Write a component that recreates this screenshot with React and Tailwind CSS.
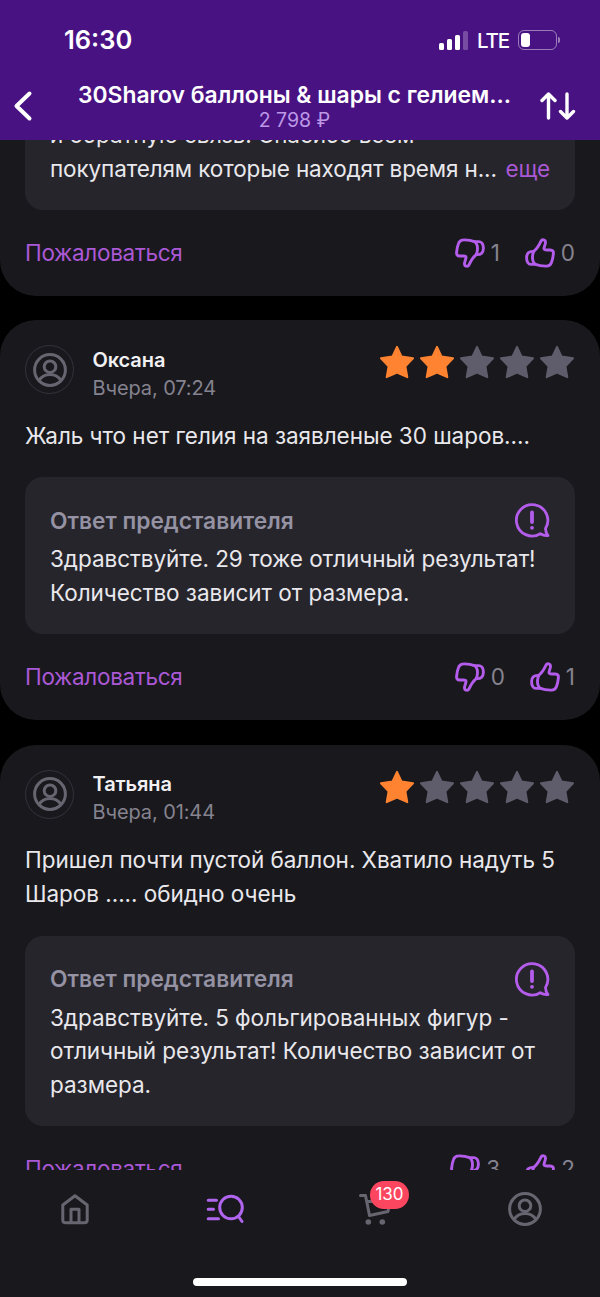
import React from 'react'

const reviews = [
  {
    name: 'Оксана',
    date: 'Вчера, 07:24',
    rating: 2,
    text: ['Жаль что нет гелия на заявленые 30 шаров....'],
    reply: ['Здравствуйте. 29 тоже отличный результат!', 'Количество зависит от размера.'],
    dislikes: 0,
    likes: 1,
  },
  {
    name: 'Татьяна',
    date: 'Вчера, 01:44',
    rating: 1,
    text: ['Пришел почти пустой баллон. Хватило надуть 5', 'Шаров ..... обидно очень'],
    reply: ['Здравствуйте. 5 фольгированных фигур -', 'отличный результат! Количество зависит от', 'размера.'],
    dislikes: 3,
    likes: 2,
  },
]

const UserIcon = ({ className }) => (
  <svg viewBox="0 0 34 34" fill="none" stroke="currentColor" strokeWidth="3" className={className}>
    <circle cx="17" cy="17" r="15.4" />
    <circle cx="17" cy="13.700" r="5.800" />
    <path d="M6 27.500C8.500 23.500 12.500 21.500 17 21.500s8.500 2 11 6" />
  </svg>
)

const ThumbIcon = ({ className }) => (
  <svg
    viewBox="0 0 30 30"
    fill="none"
    stroke="currentColor"
    strokeWidth="2.9"
    strokeLinecap="round"
    strokeLinejoin="round"
    className={className}
  >
    <path d="M9 13.200C12 10.800 14 7.500 16 3.200C17 1 20.600 1.300 20.500 4.500C20.300 7 18.900 9 19 10.800C19.200 12 20 12 22 12H25.300C27.800 12 28.600 13.500 28.400 15.500C28.100 19 27.500 22 26.500 24.500C25.500 27.200 24 28.100 21.500 28.100C17.500 28.200 14 27.800 10.500 26.400C8.300 25 7.400 22 7.500 19C7.600 16.500 8 14.600 9 13.200Z" />
    <path d="M8.500 13.400C4.200 13 1.700 15.200 1.600 19.500C1.500 23.700 3.200 26.400 6 26.400H10" />
  </svg>
)

const Star = ({ filled }) => (
  <svg
    viewBox="0 0 34 34"
    fill="currentColor"
    stroke="currentColor"
    strokeWidth="2"
    strokeLinejoin="round"
    className={filled ? 'h-[34px] w-[34px] text-[#ff8330]' : 'h-[34px] w-[34px] text-[#5f5d6c]'}
  >
    <path d="M17 1.800L21.600 11.600L33 13.300L25.400 21.400L27.300 32.200L17 27.600L6.700 32.200L8.600 21.400L1 13.300L12.400 11.600Z" />
  </svg>
)

const ReportIcon = () => (
  <svg
    viewBox="0 0 36 36"
    fill="none"
    stroke="currentColor"
    strokeWidth="2.8"
    strokeLinecap="round"
    strokeLinejoin="round"
    className="h-9 w-9 text-[#b45ceb]"
  >
    <path d="M31.500 26.500A15.700 15.700 0 1 0 26.300 31.700C28.500 33 31 34 34 33.500C32.500 31.500 31.500 29 31.500 26.500Z" />
    <path d="M18 10.500V20" strokeWidth="3.800" />
    <circle cx="18" cy="25.800" r="1.900" fill="currentColor" stroke="none" />
  </svg>
)

const CardFooter = ({ dislikes, likes }) => (
  <div className="flex h-[86px] items-center justify-between text-[22.500px]">
    <button className="tracking-[-0.3px] text-[#ab58d6]">Пожаловаться</button>
    <div className="flex items-center gap-[25px] text-[#85838f]">
      <div className="flex items-center gap-[6px]">
        <ThumbIcon className="h-[30px] w-[30px] rotate-180 text-[#b45ceb]" />
        <span>{dislikes}</span>
      </div>
      <div className="flex items-center gap-[6px]">
        <ThumbIcon className="h-[30px] w-[30px] text-[#b45ceb]" />
        <span>{likes}</span>
      </div>
    </div>
  </div>
)

const ReviewCard = ({ review }) => (
  <article className="mt-[24.700px] rounded-[36px] bg-[#19181d] px-[25px] pt-[25px]">
    <div className="flex h-[49px] items-start justify-between">
      <div className="flex gap-[18.500px]">
        <div className="flex h-[49px] w-[49px] items-center justify-center rounded-full border border-[#34333b] text-[#676570]">
          <UserIcon className="h-[34px] w-[34px]" />
        </div>
        <div className="pt-[1.500px] text-[20px] leading-[27.700px] tracking-[-0.1px]">
          <p className="font-semibold text-[#f1f0f3]">{review.name}</p>
          <p className="text-[#85838f]">{review.date}</p>
        </div>
      </div>
      <div className="mr-px flex gap-[6px]">
        {[1, 2, 3, 4, 5].map((n) => (
          <Star key={n} filled={n <= review.rating} />
        ))}
      </div>
    </div>

    <div className="mt-[24.600px] whitespace-nowrap text-[22.500px] leading-[33.800px] tracking-[-0.04px] text-[#e9e8ec]">
      {review.text.map((line) => (
        <p key={line}>{line}</p>
      ))}
    </div>

    {/* Seller reply */}
    <div className="mt-[24.600px] rounded-[18px] bg-[#26252b] px-[25px] pt-[25px] pb-6">
      <div className="flex h-9 items-center justify-between">
        <h3 className="pt-px text-[22.750px] font-semibold text-[#9492a3]">Ответ представителя</h3>
        <ReportIcon />
      </div>
      <div className="mt-1 whitespace-nowrap text-[22.500px] leading-[33.800px] tracking-[-0.04px] text-[#e9e8ec]">
        {review.reply.map((line) => (
          <p key={line}>{line}</p>
        ))}
      </div>
    </div>

    <CardFooter dislikes={review.dislikes} likes={review.likes} />
  </article>
)

const StatusBar = () => (
  <div className="flex h-20 items-center justify-between pr-10 pl-16 text-white">
    <span className="text-[25.500px] font-semibold">16:30</span>
    <div className="flex items-center gap-[9px]">
      <div className="flex h-[19px] items-end gap-[3px]">
        <span className="h-[7px] w-[5px] rounded-[1.500px] bg-white" />
        <span className="h-[11px] w-[5px] rounded-[1.500px] bg-white" />
        <span className="h-[15px] w-[5px] rounded-[1.500px] bg-white" />
        <span className="h-[19px] w-[5px] rounded-[1.500px] bg-white/25" />
      </div>
      <span className="pt-[2px] text-[20.500px] font-medium tracking-[-1.1px]">LTE</span>
      <div className="flex items-center gap-px">
        <div className="h-5 w-[39px] rounded-[6px] border-[1.500px] border-white/45 p-[2px]">
          <div className="h-full w-[9px] rounded-[3px] bg-white" />
        </div>
        <span className="h-[6px] w-[2px] rounded-r-full bg-white/45" />
      </div>
    </div>
  </div>
)

const Header = () => (
  <header className="z-10 h-[140px] shrink-0 bg-[#491283]">
    <StatusBar />
    <div className="flex items-start pr-6 pl-[13px] text-white">
      <svg viewBox="0 0 20 32" fill="none" stroke="currentColor" strokeWidth="4" strokeLinecap="round" strokeLinejoin="round" className="mt-[10px] h-8 w-5">
        <path d="M16.500 3.500L3.500 16L16.500 28.500" />
      </svg>
      <div className="flex-1 pl-4 text-center whitespace-nowrap">
        <h1 className="text-[22.850px] leading-[30px] font-semibold">30Sharov баллоны & шары с гелием...</h1>
        <p className="text-[19.500px] leading-[20px] text-[#bc98e6]">2 798 ₽</p>
      </div>
      <svg viewBox="0 0 36 30" fill="none" stroke="currentColor" strokeWidth="3.400" strokeLinecap="round" strokeLinejoin="round" className="mt-[11px] h-[30px] w-9">
        <path d="M8.500 27V3M2 9.500L8.500 3L15 9.500M27 3V27M20.500 20.500L27 27L33.500 20.500" />
      </svg>
    </div>
  </header>
)

const TabBar = () => (
  <nav className="z-10 flex h-[127px] shrink-0 flex-col justify-between bg-[#19181d] pb-[11px]">
    <div className="grid h-[78px] grid-cols-4 items-center justify-items-center text-[#67656f]">
      <svg viewBox="0 0 28 32" fill="none" stroke="currentColor" strokeWidth="3" strokeLinejoin="round" className="h-8 w-7">
        <path d="M1.800 12L14 2.800L26.200 12V27Q26.200 29.800 23.200 29.800H4.800Q1.800 29.800 1.800 27Z" />
        <path d="M10 29V16.300H18V29" />
      </svg>
      <svg viewBox="0 0 38 30" fill="none" stroke="currentColor" strokeWidth="3" strokeLinecap="round" className="h-[30px] w-[38px] text-[#b065ee]">
        <circle cx="25" cy="13.500" r="11.300" />
        <path d="M32.500 22.500L36 27.500M2.200 6.200H10.500M2.200 15.200H7.500M2.200 24.700H12.500" />
      </svg>
      <div className="relative">
        <svg viewBox="0 0 32 32" fill="none" stroke="currentColor" strokeWidth="3" strokeLinecap="round" strokeLinejoin="round" className="h-8 w-8">
          <path d="M1.500 2.500H6.500L10.500 22.500L29 18.500L31 8.500H8" />
          <circle cx="9.300" cy="29" r="2.800" fill="currentColor" stroke="none" />
          <circle cx="23.300" cy="29" r="2.800" fill="currentColor" stroke="none" />
        </svg>
        <span className="absolute -top-[12px] left-[11px] flex h-7 w-[39px] items-center justify-center rounded-full bg-[#fc4660] text-[17px] text-white">
          130
        </span>
      </div>
      <UserIcon className="h-[34px] w-[34px]" />
    </div>
    <div className="h-2 w-[214px] self-center rounded-full bg-white" />
  </nav>
)

const App = () => {
  return (
    <div className="flex h-[1297px] w-[600px] flex-col overflow-hidden bg-black font-['Inter','Noto_Sans',sans-serif]">
      <Header />
      <main className="min-h-0 flex-1 overflow-hidden">
        {/* Tail of the previous review, scrolled under the header */}
        <article className="-mt-[21.800px] rounded-b-[36px] bg-[#19181d] px-[25px]">
          <div className="rounded-b-[18px] bg-[#26252b] px-[25px] pb-6 text-[22.500px] leading-[33.800px] whitespace-nowrap text-[#e9e8ec]">
            <p className="tracking-[-0.1px]">и обратную связь. Спасибо всем</p>
            <p className="flex justify-between tracking-[-0.12px]">
              <span>покупателям которые находят время н...</span>
              <span className="text-[#ab58d6]">еще</span>
            </p>
          </div>
          <CardFooter dislikes={1} likes={0} />
        </article>

        {reviews.map((review) => (
          <ReviewCard key={review.name} review={review} />
        ))}
      </main>
      <TabBar />
    </div>
  )
}

export default App
